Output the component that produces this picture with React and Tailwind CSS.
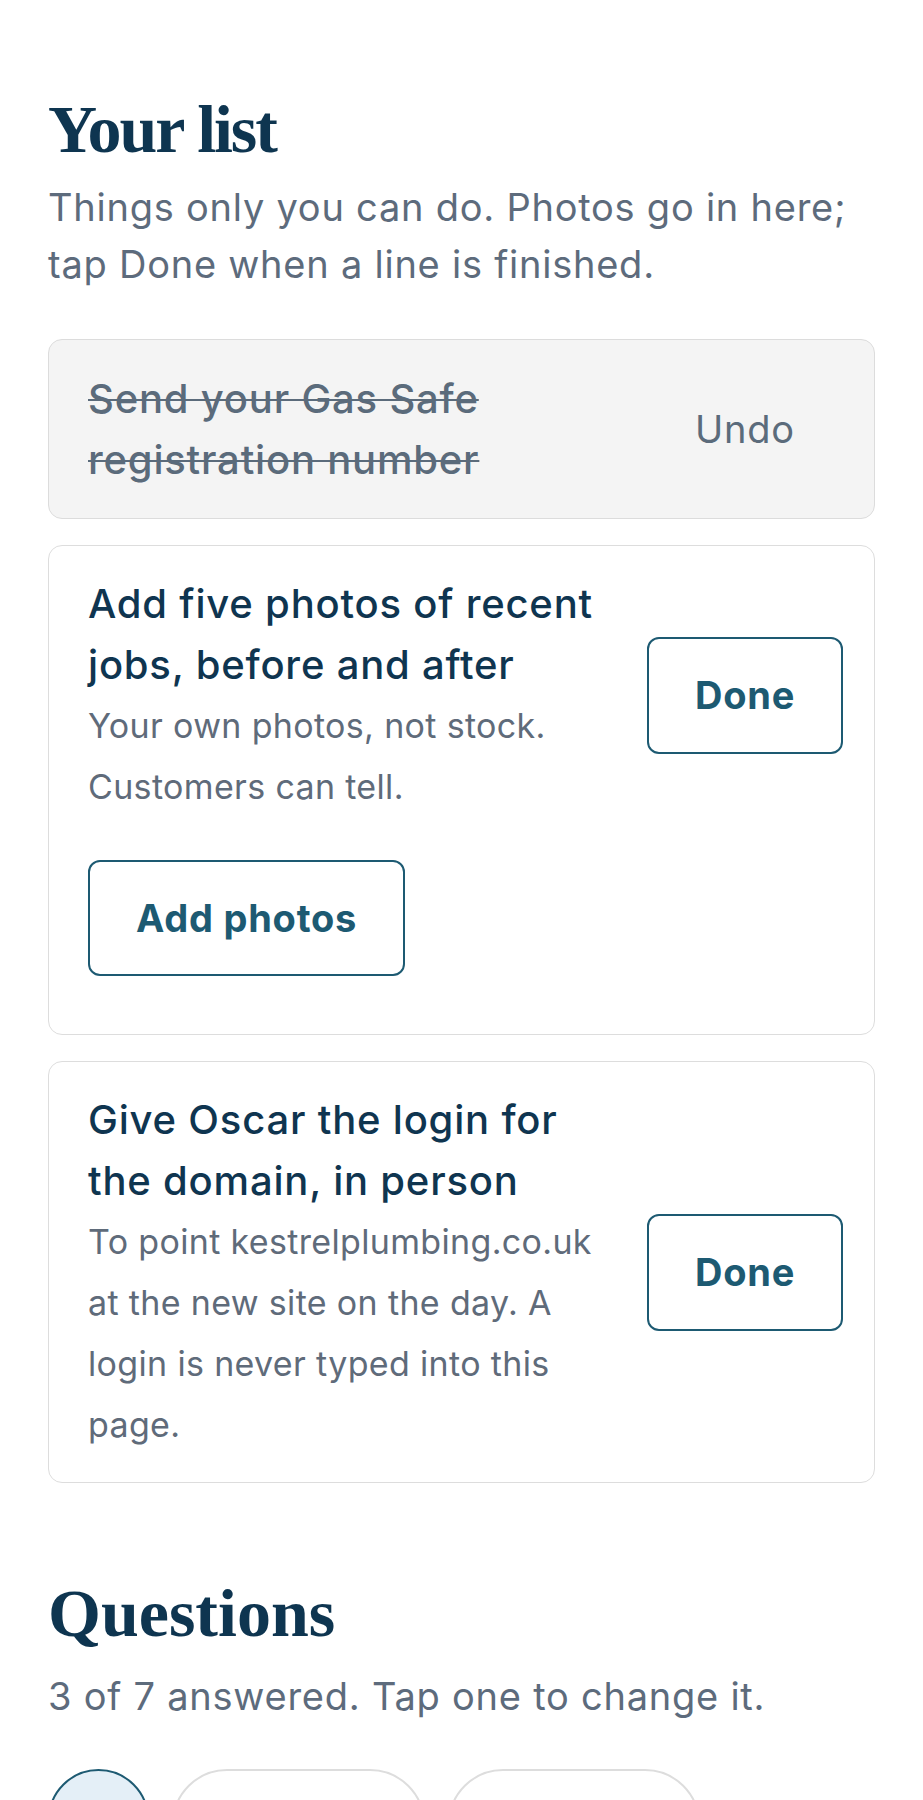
import React from 'react';

const sans = 'font-["Inter","Noto_Sans",sans-serif]';
const serif = 'font-["Liberation_Serif","Times_New_Roman",serif]';

const DoneButton = ({ children = 'Done' }) => (
  <button className="w-[196px] h-[117px] shrink-0 rounded-[12px] border-2 border-[#1d5a72] bg-white text-[38px] font-bold tracking-[0.02em] text-[#1d5a72]">
    {children}
  </button>
);

const TaskCard = ({ title, note, children }) => (
  <div className="rounded-[14px] border border-[#dddddd] bg-white pl-[39px] pr-[31px] py-[27px]">
    <div className="flex items-center gap-[32px]">
      <div className="min-w-0 flex-1">
        <p className="text-[40px] leading-[61px] font-medium tracking-[0.02em] text-[#0f3550]">{title}</p>
        <p className="text-[34px] leading-[61px] tracking-[0.01em] text-[#5f6b7a]">{note}</p>
      </div>
      <DoneButton />
    </div>
    {children}
  </div>
);

export default function App() {
  return (
    <div className={`${sans} min-h-[1800px] bg-white px-[48px] pt-[93px]`}>
      <h1 className={`${serif} text-[68px] leading-[72px] font-bold tracking-[-0.03em] text-[#0e3550]`}>Your list</h1>
      <p className="mt-[14px] text-[38px] leading-[57px] tracking-[0.02em] text-[#5d6b7c]">
        Things only you can do. Photos go in here; tap Done when a line is finished.
      </p>

      <div className="mt-[46px] flex flex-col gap-[26px]">
        <div className="rounded-[14px] border border-[#dcdcdc] bg-[#f4f4f4] pl-[39px] pr-[31px] py-[28px]">
          <div className="flex items-center gap-[32px]">
            <p className="min-w-0 flex-1 text-[40px] leading-[61px] font-medium tracking-[0.02em] text-[#5b6b7b] line-through decoration-2">
              Send your Gas Safe registration number
            </p>
            <button className="w-[196px] h-[117px] shrink-0 text-[38px] tracking-[0.02em] text-[#5b6b7b]">Undo</button>
          </div>
        </div>

        <TaskCard
          title="Add five photos of recent jobs, before and after"
          note="Your own photos, not stock. Customers can tell."
        >
          <button className="mt-[43px] mb-[31px] h-[116px] rounded-[12px] border-2 border-[#1d5a72] px-[46px] text-[38px] font-bold tracking-[0.02em] text-[#1d5a72]">
            Add photos
          </button>
        </TaskCard>

        <TaskCard
          title="Give Oscar the login for the domain, in person"
          note="To point kestrelplumbing.co.uk at the new site on the day. A login is never typed into this page."
        />
      </div>

      <h2 className={`${serif} mt-[94px] text-[68px] leading-[72px] font-bold text-[#0e3550]`}>Questions</h2>
      <p className="mt-[19px] text-[38px] leading-[57px] tracking-[0.02em] text-[#5d6b7c]">
        3 of 7 answered. Tap one to change it.
      </p>

      <div className="mt-[44px] flex gap-[23px]">
        <button className="h-[110px] w-[101px] shrink-0 rounded-full border-2 border-[#1d5a72] bg-[#e4eff7] pt-[12px] self-start text-[36px] leading-[57px] text-[#0f3550]">
          All
        </button>
        <button className="h-[110px] w-[253px] shrink-0 rounded-full border-2 border-[#dddddd] bg-white pt-[12px] self-start text-[36px] leading-[57px] text-[#0f3550]">
          Hours / days
        </button>
        <button className="h-[110px] w-[252px] shrink-0 rounded-full border-2 border-[#dddddd] bg-white pt-[12px] self-start text-[36px] leading-[57px] text-[#0f3550]">
          Area / town
        </button>
      </div>
    </div>
  );
}
